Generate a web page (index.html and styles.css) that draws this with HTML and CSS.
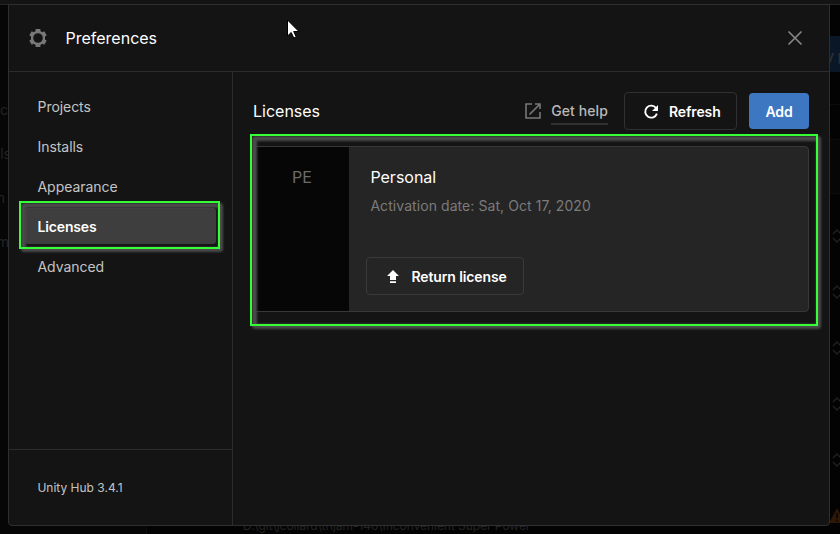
FILE: index.html
```html
<!DOCTYPE html>
<html lang="en">
<head>
<meta charset="utf-8">
<title>Preferences</title>
<link rel="stylesheet" href="styles.css">
</head>
<body>
<div class="backdrop" aria-hidden="true">
  <div class="topbar"></div>
  <div class="rail"></div>
  <span class="ghost g-projects">ec</span>
  <span class="ghost g-installs">lls</span>
  <span class="ghost g-learn">n</span>
  <span class="ghost g-community">m</span>
  <span class="new-project">y p</span>
  <i class="line l1"></i><i class="band"></i>
  <svg class="sorts" width="11" height="240" viewBox="0 0 11 240" fill="none" stroke="#202020" stroke-width="1.3">
    <path d="M4 5l4-4 4 4M4 9l4 4 4-4M4 61l4-4 4 4M4 65l4 4 4-4M4 117l4-4 4 4M4 121l4 4 4-4M4 173l4-4 4 4M4 177l4 4 4-4M4 229l4-4 4 4M4 233l4 4 4-4"/>
  </svg>
  <svg class="warn" width="12" height="16" viewBox="0 0 12 16"><path d="M0 15L8 0l8 15z" fill="#2d1806"/><path d="M8 5v5M8 11.5v2" stroke="#090502" stroke-width="1.6"/></svg>
  <span class="ghost g-path">D:\git\jcollard\trijam-148\Inconvenient Super Power</span>
</div>

<main class="dialog">
  <header class="head">
    <svg class="gear" width="18" height="18" viewBox="0 0 18 18"><path fill="#787878" fill-rule="evenodd" d="M6.600 0h4.800v2.100l1.900 1.100 2-.9 2.400 4-1.700 1.300v2.800l1.700 1.300-2.400 4-2-.9-1.900 1.100V18H6.600v-2.100l-1.900-1.100-2 .9-2.400-4L2 10.400V7.600L.3 6.300l2.400-4 2 .9 1.900-1.100zM9 4.200a4.800 4.800 0 1 0 0 9.600a4.800 4.800 0 0 0 0-9.600z"/></svg>
    <h1>Preferences</h1>
    <svg class="close" width="16" height="16" viewBox="0 0 16 16" fill="none" stroke="#858585" stroke-width="1.7"><path d="M1.500 1.500l13 13M14.500 1.500l-13 13"/></svg>
  </header>
  <div class="body">
    <aside class="side">
      <nav>
        <a>Projects</a>
        <a>Installs</a>
        <a>Appearance</a>
        <a class="active">Licenses</a>
        <a>Advanced</a>
      </nav>
      <footer>Unity Hub 3.4.1</footer>
    </aside>
    <section class="content">
      <div class="bar">
        <h2>Licenses</h2>
        <svg class="ext" width="16" height="16" viewBox="0 0 16 16" fill="none" stroke="#777" stroke-width="1.600"><path d="M7 1H1v14h14V9M10 1h5v5M15 1L4.500 11.500"/></svg>
        <a class="help">Get help</a>
        <button class="btn refresh">
          <svg width="16" height="16" viewBox="0 0 16 16"><path d="M13.300 4.400A6 6 0 1 0 13.900 9.600" fill="none" stroke="#fff" stroke-width="1.900"/><path d="M15 1v6H9z" fill="#fff"/></svg>
          Refresh
        </button>
        <button class="btn add">Add</button>
      </div>
      <article class="card">
        <div class="badge">PE</div>
        <div class="info">
          <h3>Personal</h3>
          <p>Activation date: Sat, Oct 17, 2020</p>
          <button class="btn return">
            <svg width="12" height="14" viewBox="0 0 12 14" fill="#fff"><path d="M6 0L12 6H9v4H3V6H0zM3 11.300h6v1.700H3z"/></svg>
            Return license
          </button>
        </div>
      </article>
    </section>
  </div>
</main>

<div class="mark mark-nav"></div>
<div class="mark mark-card"></div>
<svg class="cursor" width="13" height="20" viewBox="0 0 13 20"><path d="M.5 1v16l3.700-3.500 2.600 5.500 2.400-1.100-2.500-5.400h5.200z" fill="#fff" stroke="#000"/></svg>
</body>
</html>
```
FILE: styles.css
```css
* { box-sizing: border-box; }
body {
  margin: 0;
  width: 840px;
  height: 534px;
  overflow: hidden;
  position: relative;
  background: #030303;
  color: #c4c4c4;
  font: 14px/20px Inter, sans-serif;
}
h1, h2, h3, p { margin: 0; font-weight: 400; }

.backdrop { position: absolute; inset: 0; overflow: hidden; }
.topbar { height: 5px; background: #141414; border-bottom: 1px solid #262626; }
.rail { position: absolute; left: 0; top: 5px; width: 147px; height: 529px; background: #060606; border-right: 1px solid #0c0c0c; }
.ghost { position: absolute; color: #242424; white-space: nowrap; }
.g-projects { right: 832px; top: 100px; }
.g-installs { right: 829px; top: 144px; }
.g-learn { right: 835px; top: 188px; }
.g-community { right: 831px; top: 232px; }
.g-path { left: 243px; top: 516px; font-size: 12px; letter-spacing: -.05px; }
.new-project { position: absolute; left: 826px; top: 36px; width: 60px; height: 36px; background: #0a1727; color: #2a2f36; font-weight: 600; line-height: 40px; }
.line { position: absolute; left: 830px; right: 0; top: 104px; height: 1px; background: #0b0b0b; }
.band { position: absolute; left: 830px; right: 0; top: 139px; height: 55px; background: #060606; border-block: 1px solid #0b0b0b; }
.sorts { position: absolute; left: 829px; top: 229px; }
.warn { position: absolute; left: 829px; top: 508px; }

.dialog {
  position: relative;
  display: flex;
  flex-direction: column;
  width: 822px;
  height: 522px;
  margin: 4px 0 0 8px;
  background: #141414;
  border: 1px solid #2f2f2f;
  border-radius: 0 0 4px 4px;
}
.head { display: flex; align-items: center; height: 67px; padding: 0 26px 0 19.5px; border-bottom: 1px solid #2c2c2c; }
.head h1 { margin-left: 19px; font-size: 16px; color: #fff; }
.close { margin-left: auto; }
.body { display: flex; flex: 1; }
.side { display: flex; flex-direction: column; width: 224px; border-right: 1px solid #2c2c2c; }
.side nav { display: flex; flex-direction: column; gap: 4px; padding: 16px; flex: 1; }
.side a { height: 36px; padding: 0 12.500px; line-height: 37px; border-radius: 3px; letter-spacing: -.05px; }
.side nav .active { background: #3e3e3e; color: #fff; font-weight: 600; letter-spacing: -.15px; }
.side footer { height: 76px; padding-left: 28.400px; border-top: 1px solid #2c2c2c; font-size: 12px; line-height: 76px; }

.content { flex: 1; padding: 20px 20px 0; }
.bar { display: flex; align-items: center; height: 38px; }
.bar h2 { font-size: 16px; color: #fff; margin-right: auto; }
.help { margin: 1px 16px 0 10px; height: 26px; line-height: 24px; border-bottom: 2px solid #303030; font-weight: 500; color: #b9b9b9; letter-spacing: .1px; }
.btn { display: flex; align-items: center; height: 38px; padding: 1px 0 0; margin: 0; font: 600 14px/20px Inter, sans-serif; color: #fff; background: transparent; border: 1px solid #303030; border-radius: 4px; white-space: nowrap; letter-spacing: -.12px; }
.refresh { width: 113px; padding-left: 18px; gap: 10px; }
.add { width: 60px; height: 36px; margin-left: 12px; justify-content: center; background: #3d77c2; border: 0; }
.card { display: flex; width: 556px; height: 166px; margin-top: 16px; background: #252525; border: 1px solid #383838; border-radius: 4px; overflow: hidden; }
.badge { width: 95px; background: #060606; color: #6b6b6b; font-size: 16px; text-align: center; padding: 20px 0 0 1px; }
.info { padding: 20px 0 0 17px; }
.info h3 { margin-left: 4.400px; font-size: 16px; color: #fff; }
.info p { margin: 9px 0 0 4.400px; color: #7b7b7b; letter-spacing: .07px; }
.return { width: 158px; margin-top: 41px; padding-left: 20px; gap: 12.500px; border-color: #3a3a3a; }

.mark { position: absolute; border: 2px solid #35ff35; }
.mark::before { content: ""; position: absolute; inset: 0 -5px -5px 0; border: 5px solid #4b4b4b; border-radius: 3px; filter: blur(.8px); }
.mark::after { content: ""; position: absolute; inset: -2px; border: 2px solid #35ff35; }
.mark-nav { left: 19px; top: 201px; width: 201px; height: 48px; }
.mark-card { left: 250px; top: 134px; width: 568px; height: 192px; }
.cursor { position: absolute; left: 287px; top: 19px; }
```
